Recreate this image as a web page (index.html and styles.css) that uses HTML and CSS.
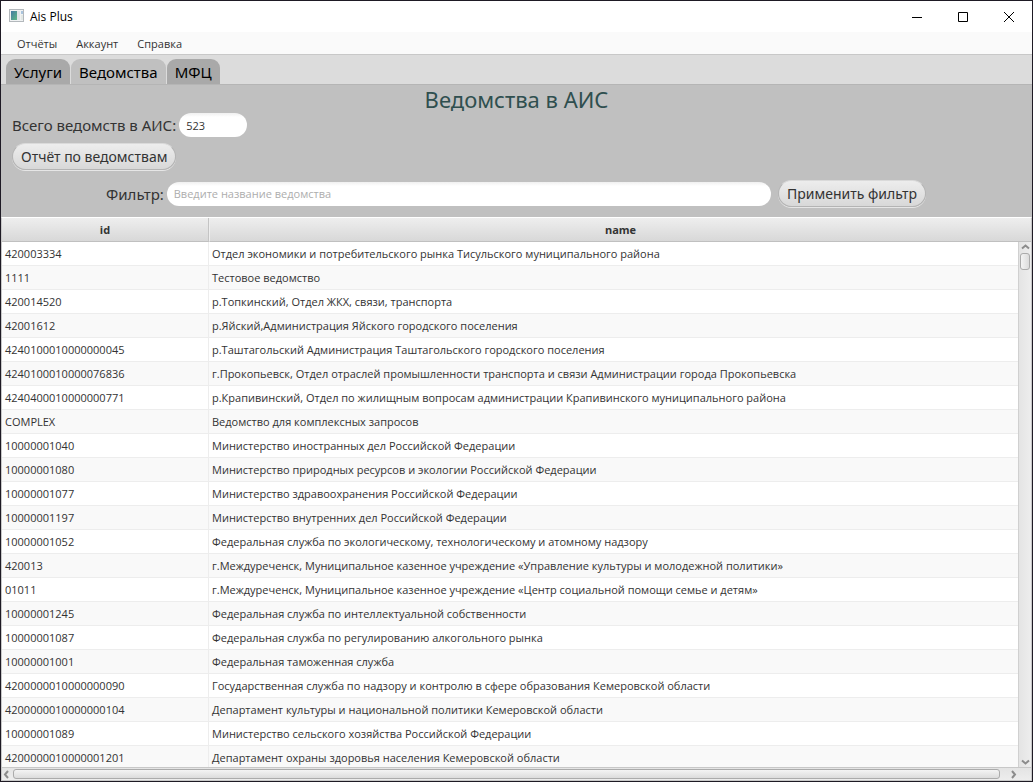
FILE: index.html
```html
<!DOCTYPE html>
<html lang="ru">
<head>
<meta charset="utf-8">
<title>Ais Plus</title>
<link rel="stylesheet" href="styles.css">
</head>
<body>
<div class="window">
  <header class="titlebar">
    <svg class="app-icon" width="16" height="14" viewBox="0 0 16 14" aria-hidden="true">
      <defs><linearGradient id="pane" x1="0" y1="0" x2="1" y2="1"><stop offset="0" stop-color="#4379a4"/><stop offset="1" stop-color="#5db884"/></linearGradient></defs>
      <rect x=".5" y=".5" width="14" height="12" fill="#f0f2f3" stroke="#b3b8bc"/>
      <rect x="2" y="2" width="6" height="9" fill="url(#pane)"/>
      <rect x="8" y="2" width="3" height="9" fill="#dfe4e8"/>
      <rect x="12" y="2" width="2" height="3" fill="#a9c4dd"/>
      <rect x="12" y="6" width="2" height="5" fill="#e2e8e4"/>
    </svg>
    <span class="app-title">Ais Plus</span>
    <div class="window-buttons">
      <button class="window-button" aria-label="Свернуть"><svg width="10" height="10" viewBox="0 0 10 10"><path d="M0 5.5h10"/></svg></button>
      <button class="window-button" aria-label="Развернуть"><svg width="10" height="10" viewBox="0 0 10 10"><path d="M.5.5h9v9h-9z"/></svg></button>
      <button class="window-button" aria-label="Закрыть"><svg width="10" height="10" viewBox="0 0 10 10"><path d="M0 0l10 10M10 0L0 10"/></svg></button>
    </div>
  </header>
  <nav class="menubar">
    <button class="menu">Отчёты</button>
    <button class="menu">Аккаунт</button>
    <button class="menu">Справка</button>
  </nav>
  <div class="tabs" role="tablist">
    <button class="tab" role="tab" aria-selected="false">Услуги</button>
    <button class="tab tab-active" role="tab" aria-selected="true">Ведомства</button>
    <button class="tab" role="tab" aria-selected="false">МФЦ</button>
  </div>
  <main class="panel">
    <h1 class="heading">Ведомства в АИС</h1>
    <div class="line">
      <label class="label" for="total">Всего ведомств в АИС:</label>
      <input class="field field-total" id="total" type="text" value="523">
    </div>
    <div class="line line-report"><button class="button">Отчёт по ведомствам</button></div>
    <form class="line line-filter">
      <label class="label label-filter" for="filter">Фильтр:</label>
      <input class="field field-filter" id="filter" type="text" placeholder="Введите название ведомства">
      <button class="button" type="button">Применить фильтр</button>
    </form>
    <section class="grid">
      <div class="rows">
        <table class="table">
          <thead><tr><th class="col-id">id</th><th>name</th></tr></thead>
          <tbody>
            <tr><td>420003334</td><td>Отдел экономики и потребительского рынка Тисульского муниципального района</td></tr>
            <tr><td>1111</td><td>Тестовое ведомство</td></tr>
            <tr><td>420014520</td><td>р.Топкинский, Отдел ЖКХ, связи, транспорта</td></tr>
            <tr><td>42001612</td><td>р.Яйский,Администрация Яйского городского поселения</td></tr>
            <tr><td>4240100010000000045</td><td>р.Таштагольский Администрация Таштагольского городского поселения</td></tr>
            <tr><td>4240100010000076836</td><td>г.Прокопьевск, Отдел отраслей промышленности транспорта и связи Администрации города Прокопьевска</td></tr>
            <tr><td>4240400010000000771</td><td>р.Крапивинский, Отдел по жилищным вопросам администрации Крапивинского муниципального района</td></tr>
            <tr><td>COMPLEX</td><td>Ведомство для комплексных запросов</td></tr>
            <tr><td>10000001040</td><td>Министерство иностранных дел Российской Федерации</td></tr>
            <tr><td>10000001080</td><td>Министерство природных ресурсов и экологии Российской Федерации</td></tr>
            <tr><td>10000001077</td><td>Министерство здравоохранения Российской Федерации</td></tr>
            <tr><td>10000001197</td><td>Министерство внутренних дел Российской Федерации</td></tr>
            <tr><td>10000001052</td><td>Федеральная служба по экологическому, технологическому и атомному надзору</td></tr>
            <tr><td>420013</td><td>г.Междуреченск, Муниципальное казенное учреждение «Управление культуры и молодежной политики»</td></tr>
            <tr><td>01011</td><td>г.Междуреченск, Муниципальное казенное учреждение «Центр социальной помощи семье и детям»</td></tr>
            <tr><td>10000001245</td><td>Федеральная служба по интеллектуальной собственности</td></tr>
            <tr><td>10000001087</td><td>Федеральная служба по регулированию алкогольного рынка</td></tr>
            <tr><td>10000001001</td><td>Федеральная таможенная служба</td></tr>
            <tr><td>4200000010000000090</td><td>Государственная служба по надзору и контролю в сфере образования Кемеровской области</td></tr>
            <tr><td>4200000010000000104</td><td>Департамент культуры и национальной политики Кемеровской области</td></tr>
            <tr><td>10000001089</td><td>Министерство сельского хозяйства Российской Федерации</td></tr>
            <tr><td>4200000010000001201</td><td>Департамент охраны здоровья населения Кемеровской области</td></tr>
          </tbody>
        </table>
        <div class="vscroll" aria-hidden="true">
          <svg class="arrow" width="9" height="7" viewBox="0 0 9 7"><path d="M1 5.500l3.500-3 3.500 3"/></svg>
          <div class="vthumb"></div>
          <svg class="arrow arrow-end" width="9" height="7" viewBox="0 0 9 7"><path d="M1 1.500l3.500 3 3.500-3"/></svg>
        </div>
      </div>
      <div class="hscroll" aria-hidden="true">
        <svg class="arrow" width="7" height="9" viewBox="0 0 7 9"><path d="M5 1l-3 3.500 3 3.500"/></svg>
        <div class="hthumb"></div>
        <svg class="arrow" width="7" height="9" viewBox="0 0 7 9"><path d="M2 1l3 3.500-3 3.500"/></svg>
      </div>
    </section>
  </main>
</div>
</body>
</html>
```
FILE: styles.css
```css
* { box-sizing: border-box; }

body {
  margin: 0;
  font-family: "Open Sans", "Noto Sans", sans-serif;
  font-size: 11px;
  color: #333;
}

button, input { font: inherit; color: inherit; }

.window {
  display: flex;
  flex-direction: column;
  height: 100vh;
  overflow: hidden;
  border: 1px solid #1e1a24;
  background: #c0c0c0;
}

.titlebar {
  display: flex;
  align-items: center;
  flex: none;
  height: 31px;
  padding-left: 8px;
  background: #fff;
  color: #000;
}

.app-icon { margin-bottom: 2px; }

.app-title { margin-left: 5px; font-size: 12px; }

.window-buttons { display: flex; margin-left: auto; }

.window-button {
  display: flex;
  align-items: center;
  justify-content: center;
  width: 46px;
  height: 28px;
  padding: 0;
  border: 0;
  background: none;
}

.window-button svg { fill: none; stroke: #000; }

.menubar {
  display: flex;
  flex: none;
  height: 23px;
  padding-left: 8px;
  background: #fafafa;
  border-bottom: 1px solid #c8c8c8;
}

.menu {
  padding: 0 8px;
  margin-right: 3px;
  border: 0;
  background: none;
}

.tabs {
  display: flex;
  flex: none;
  gap: 1px;
  height: 30px;
  padding: 4px 5px 0;
  background: #dcdcdc;
  border-bottom: 1px solid #b5b5b5;
}

.tab {
  padding: 0 8px;
  border: 0;
  border-radius: 9px 9px 0 0;
  background: #a9a9a9;
  color: #000;
  font-family: "Noto Sans", sans-serif;
  font-size: 15px;
  line-height: 24px;
}

.tab-active { background: #c0c0c0; }

.panel {
  display: flex;
  flex-direction: column;
  flex: 1;
  min-height: 0;
}

.heading {
  margin: 0;
  color: #2f4f4f;
  font-family: "Noto Sans", sans-serif;
  font-size: 22px;
  font-weight: 400;
  line-height: 28px;
  text-align: center;
}

.line {
  display: flex;
  align-items: center;
  gap: 3px;
  padding: 0 11px;
}

.line-report { padding-top: 6px; }

.line-filter {
  gap: 7px;
  padding: 10px 106px 10px 105px;
}

.label {
  font-family: "Noto Sans", sans-serif;
  font-size: 15px;
  line-height: 24px;
  white-space: nowrap;
}

.label-filter { margin-right: -4px; }

.field {
  height: 24px;
  padding: 0 7px;
  border: 0;
  border-radius: 12px;
  background: linear-gradient(#f0f0f0, #fff 4px);
}

.field-total { width: 68px; }

.field-filter { flex: 1; min-width: 0; }

.field::placeholder { color: #adadad; opacity: 1; }

.button {
  height: 27px;
  padding: 0 8px;
  border: 1px solid #b4b4b4;
  border-top-color: #dadada;
  border-radius: 14px;
  background: linear-gradient(#ededed, #d8d8d8);
  box-shadow: 0 1px 0 #e6e6e6;
  font-family: "Noto Sans", sans-serif;
  font-size: 14px;
  line-height: 24px;
  white-space: nowrap;
}

.grid {
  display: flex;
  flex-direction: column;
  flex: 1;
  min-height: 0;
  border: 1px solid #c8c8c8;
  border-top-color: #fff;
}

.rows {
  position: relative;
  flex: 1;
  min-height: 0;
  overflow: hidden;
  background: #fff;
}

.table {
  width: 100%;
  table-layout: fixed;
  border-collapse: separate;
  border-spacing: 0;
}

.table th {
  height: 24px;
  padding: 0;
  border-right: 1px solid #c4c4c4;
  border-bottom: 1px solid #c0c0c0;
  background: linear-gradient(#eee, #d8d8d8);
  font-weight: 700;
  line-height: 23px;
}

.table th + th { border-right: 0; border-left: 1px solid #eee; }

.table .col-id { width: 207px; }

.table td {
  height: 24px;
  padding: 0 3px;
  border-right: 1px solid #ededed;
  border-bottom: 1px solid #ededed;
  line-height: 23px;
  overflow: hidden;
  white-space: nowrap;
}

.table tbody tr:nth-child(even) { background: #f9f9f9; }

.vscroll {
  position: absolute;
  top: 24px;
  right: 0;
  bottom: 0;
  display: flex;
  flex-direction: column;
  align-items: center;
  width: 13px;
  padding: 1px 0;
  border-left: 1px solid #d0d0d0;
  background: linear-gradient(90deg, #e4e4e4, #ededed);
}

.arrow { flex: none; fill: none; stroke: #8c8c8c; stroke-width: 2; }

.arrow-end { margin-top: auto; }

.vthumb {
  width: 10px;
  height: 17px;
  margin-top: 3px;
  border: 1px solid #ababab;
  border-radius: 3px;
  background: linear-gradient(90deg, #f4f4f4, #dcdcdc);
}

.hscroll {
  display: flex;
  align-items: center;
  flex: none;
  height: 13px;
  padding: 0 14px 0 1px;
  border-top: 1px solid #c8c8c8;
  background: linear-gradient(#e4e4e4, #ededed);
}

.hthumb {
  flex: 1;
  height: 10px;
  margin: 0 10px 0 3px;
  border: 1px solid #ababab;
  border-radius: 3px;
  background: linear-gradient(#f4f4f4, #dcdcdc);
}
```
